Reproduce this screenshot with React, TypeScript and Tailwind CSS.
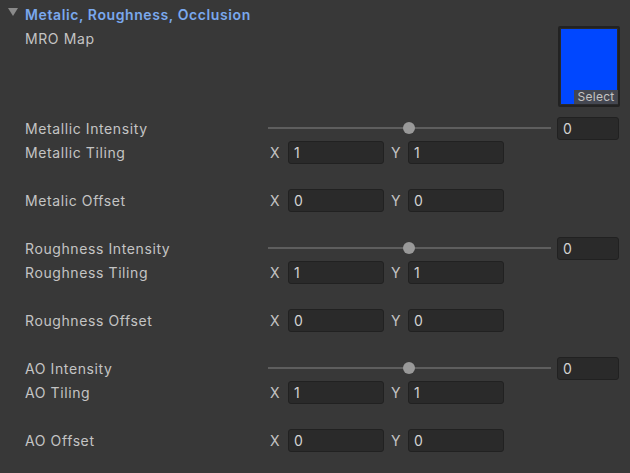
import React from "react";

const labelCls = "w-[243px] shrink-0 text-[14px] tracking-[0.6px] text-[#c4c4c4]";

function Field({ value, className }: { value: string; className: string }) {
  return (
    <div
      className={`h-[23px] rounded-[3px] border border-[#212121] bg-[#2a2a2a] pl-[5px] flex items-center text-[14px] text-[#d2d2d2] ${className}`}
    >
      {value}
    </div>
  );
}

function SliderRow({ label }: { label: string }) {
  return (
    <div className="flex h-[24px] items-center">
      <div className={labelCls}>{label}</div>
      <div className="flex flex-1 items-center">
        <div className="relative h-[12px] w-[283px]">
          <div className="absolute left-0 right-0 top-[5px] h-[2px] bg-[#5e5e5e]" />
          <div className="absolute left-[135px] top-0 h-[12px] w-[12px] rounded-full bg-[#999999]" />
        </div>
        <Field value="0" className="ml-[6px] w-[62px]" />
      </div>
    </div>
  );
}

function VecRow({ label, x, y }: { label: string; x: string; y: string }) {
  return (
    <div className="flex h-[24px] items-center">
      <div className={labelCls}>{label}</div>
      <div className="flex items-center">
        <span className="ml-[2px] w-[18px] text-[14px] text-[#c4c4c4]">X</span>
        <Field value={x} className="w-[96px]" />
        <span className="ml-[7px] w-[17px] text-[14px] text-[#c4c4c4]">Y</span>
        <Field value={y} className="w-[96px]" />
      </div>
    </div>
  );
}

function Group({ name }: { name: string }) {
  return (
    <div className="flex flex-col">
      <SliderRow label={`${name} Intensity`} />
      <VecRow label={`${name} Tiling`} x="1" y="1" />
      <div className="h-[24px]" />
      <VecRow label={`${name === "Metallic" ? "Metalic" : name} Offset`} x="0" y="0" />
      <div className="h-[24px]" />
    </div>
  );
}

export default function App() {
  return (
    <div
      className="h-[473px] w-[630px] overflow-hidden bg-[#383838] pl-[25px] pr-[10px]"
      style={{ fontFamily: "Inter, 'Noto Sans', sans-serif" }}
    >
      <div className="relative flex h-[26px] items-center pt-[2px]">
        <svg className="absolute left-[-17px] top-[8px]" width="10" height="9" viewBox="0 0 10 9">
          <polygon points="0,0 10,0 5,8" fill="#8a8a8a" />
        </svg>
        <span className="text-[14px] font-semibold tracking-[0.6px] text-[#7aa8ee]">
          Metalic, Roughness, Occlusion
        </span>
      </div>
      <div className="flex h-[81px]">
        <div className="flex-1 pt-[2px] text-[14px] tracking-[0.6px] text-[#c4c4c4]">MRO Map</div>
        <div className="relative h-[81px] w-[62px] rounded-[2px] border-2 border-[#222222] bg-[#2a2a2a] p-[1px]">
          <div className="h-full w-full bg-[#0047ff]" />
          <div className="absolute bottom-[1px] right-[0px] flex h-[14px] w-[44px] items-center justify-center bg-[#484848]/95 text-[12px] leading-none tracking-[0.3px] text-[#c4c4c4]">
            Select
          </div>
        </div>
      </div>
      <div className="h-[9px]" />
      <Group name="Metallic" />
      <Group name="Roughness" />
      <Group name="AO" />
    </div>
  );
}
